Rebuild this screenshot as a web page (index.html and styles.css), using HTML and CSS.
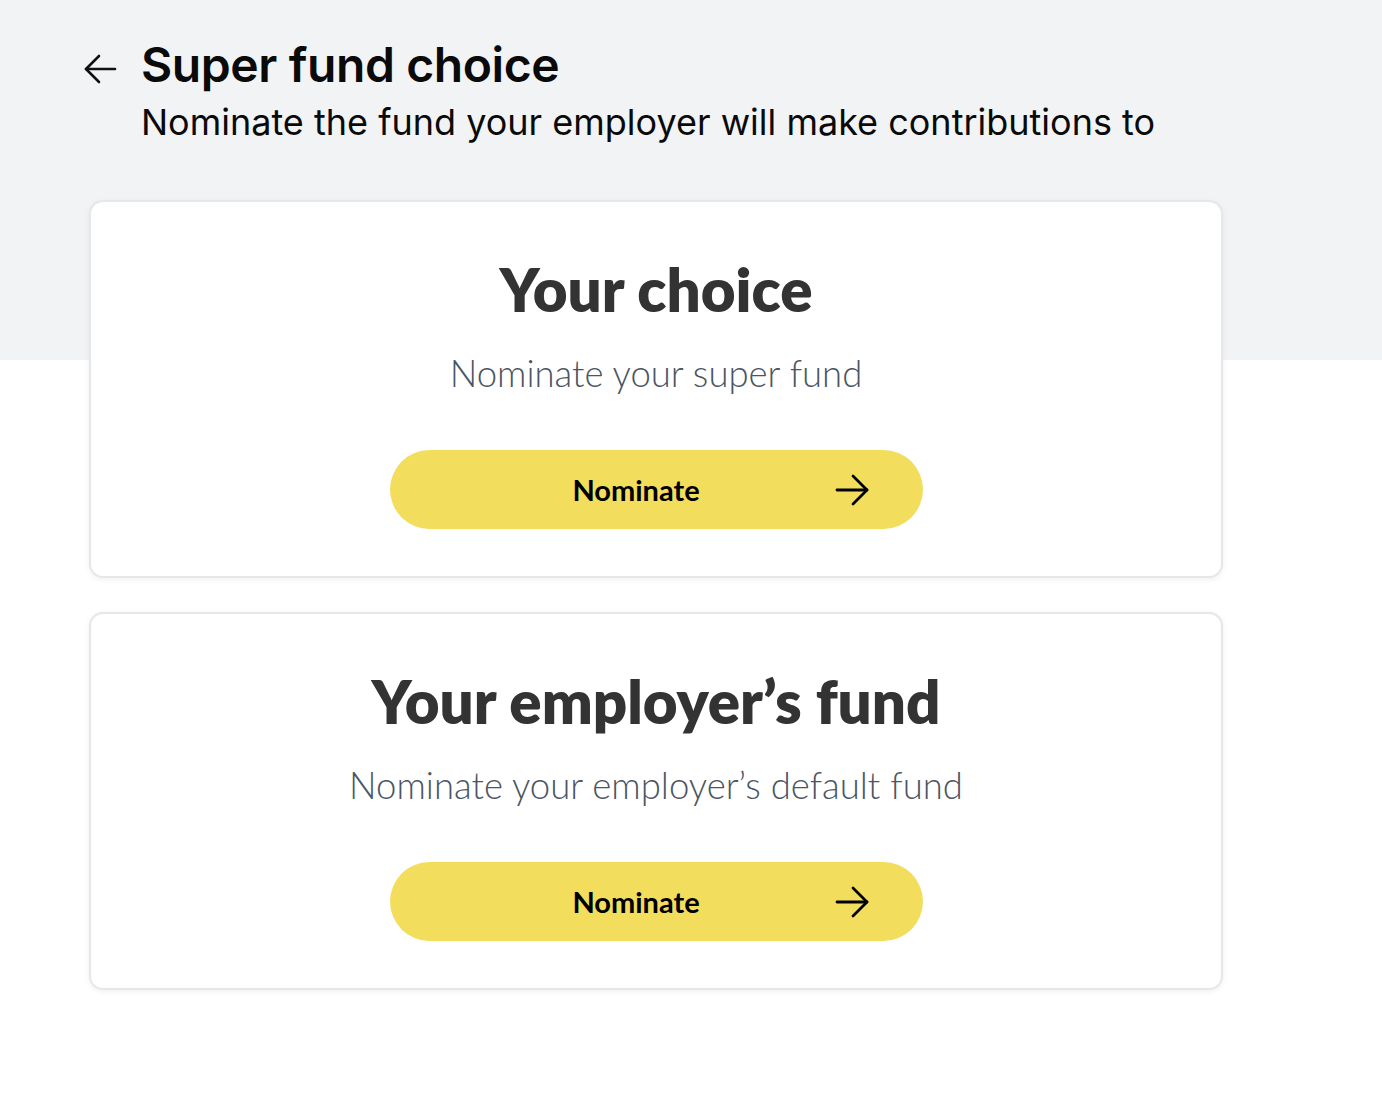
FILE: index.html
```html
<!DOCTYPE html>
<html lang="en">
<head>
<meta charset="utf-8">
<title>Super fund choice</title>
<link rel="stylesheet" href="styles.css">
</head>
<body>
<div class="page">
  <header class="page-header">
    <button class="back" aria-label="Back">
      <svg width="36" height="36" viewBox="0 0 36 36" fill="none" stroke="#111" stroke-width="2.6" stroke-linecap="round" stroke-linejoin="round"><path d="M33 18H4"/><path d="M17 5L4 18l13 13"/></svg>
    </button>
    <div class="titles">
      <h1 class="title">Super fund choice</h1>
      <p class="subtitle">Nominate the fund your employer will make contributions to</p>
    </div>
  </header>
  <main class="cards">
    <section class="card">
      <h2 class="card-title">Your choice</h2>
      <p class="card-text">Nominate your super fund</p>
      <button class="nominate">
        <span class="nominate-label">Nominate</span>
        <svg class="nominate-arrow" width="34" height="34" viewBox="0 0 34 34" fill="none" stroke="#000" stroke-width="2.8" stroke-linecap="round" stroke-linejoin="round"><path d="M2 17h30"/><path d="M18 3l14 14-14 14"/></svg>
      </button>
    </section>
    <section class="card">
      <h2 class="card-title">Your employer’s fund</h2>
      <p class="card-text">Nominate your employer’s default fund</p>
      <button class="nominate">
        <span class="nominate-label">Nominate</span>
        <svg class="nominate-arrow" width="34" height="34" viewBox="0 0 34 34" fill="none" stroke="#000" stroke-width="2.8" stroke-linecap="round" stroke-linejoin="round"><path d="M2 17h30"/><path d="M18 3l14 14-14 14"/></svg>
      </button>
    </section>
  </main>
</div>
</body>
</html>
```
FILE: styles.css
```css
* { box-sizing: border-box; }
html, body { margin: 0; padding: 0; }
body {
  background: linear-gradient(#f2f3f5 0, #f2f3f5 360px, #ffffff 360px);
  min-height: 1108px;
  font-family: Inter, "Liberation Sans", sans-serif;
  color: #000;
}
.page {
  width: 1134px;
  margin-left: 89px;
  padding-top: 36px;
}
.page-header {
  display: flex;
  align-items: flex-start;
  gap: 23px;
  margin-left: -7px;
}
.back {
  background: none;
  border: 0;
  padding: 0;
  margin-top: 15px;
  width: 36px;
  height: 36px;
  cursor: pointer;
}
.back svg { display: block; }
.titles { display: flex; flex-direction: column; }
.title {
  margin: 0;
  font-size: 48px;
  line-height: 58px;
  font-weight: 600;
  letter-spacing: -0.4px;
  color: #0a0a0a;
}
.subtitle {
  margin: 6px 0 0;
  font-size: 36px;
  line-height: 44px;
  font-weight: 400;
  color: #0a0a0a;
}
.cards {
  margin-top: 56px;
  display: flex;
  flex-direction: column;
  gap: 34px;
}
.card {
  background: #fff;
  border: 2px solid #e6e7eb;
  border-radius: 14px;
  box-shadow: 0 2px 6px rgba(0,0,0,0.06);
  height: 378px;
  display: flex;
  flex-direction: column;
  align-items: center;
  padding-top: 48px;
  font-family: Lato, "Noto Sans", sans-serif;
}
.card-title {
  margin: 0;
  font-size: 60px;
  line-height: 78px;
  font-weight: 800;
  color: #333333;
}
.card-text {
  margin: 23px 0 0;
  font-size: 36.5px;
  line-height: 44px;
  font-weight: 300;
  color: #4b5563;
}
.nominate {
  margin-top: 55px;
  width: 533px;
  height: 79px;
  border: 0;
  border-radius: 40px;
  background: #f2de5c;
  display: flex;
  align-items: center;
  padding: 0 54px;
  gap: 6px;
  cursor: pointer;
  font-family: Lato, "Noto Sans", sans-serif;
}
.nominate-label {
  flex: 1;
  text-align: center;
  font-size: 29px;
  font-weight: 700;
  color: #000;
}
.nominate-arrow { display: block; flex: none; }
```
